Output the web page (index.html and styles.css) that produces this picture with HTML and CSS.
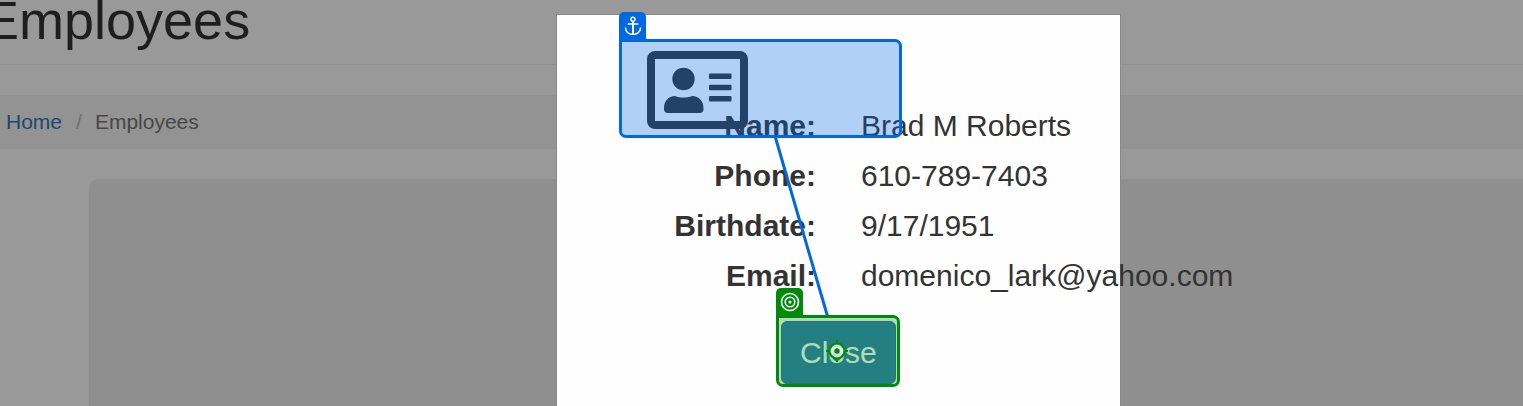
FILE: index.html
```html
<!DOCTYPE html>
<html lang="en">
<head>
<meta charset="utf-8">
<title>Employees</title>
<link rel="stylesheet" href="styles.css">
</head>
<body>
<div class="page">
  <header class="page-header"><h1 class="page-title">Employees</h1></header>
  <nav class="breadcrumb" aria-label="Breadcrumb">
    <a class="crumb-link" href="#">Home</a>
    <span class="crumb-divider">/</span>
    <span class="crumb-current">Employees</span>
  </nav>
  <main class="well"></main>
</div>
<div class="backdrop"></div>
<section class="modal" role="dialog" aria-label="Employee details">
  <svg class="card-icon" viewBox="0 0 101 78" aria-hidden="true">
    <rect x="4" y="4" width="93" height="70" rx="4" fill="none" stroke="currentColor" stroke-width="8"/>
    <circle cx="36.500" cy="28" r="11.200"/>
    <path d="M28 45C33 47 40 47 45 45C52 45 56.500 50 56.500 57V58Q56.500 62 52.500 62H21Q17 62 17 58V57C17 50 21.500 45 28 45Z"/>
    <rect x="62" y="22.500" width="22.500" height="5.500" rx="1"/>
    <rect x="62" y="33.700" width="22.500" height="5.500" rx="1"/>
    <rect x="62" y="45" width="22.500" height="5.500" rx="1"/>
  </svg>
  <dl class="details">
    <dt>Name:</dt><dd>Brad M Roberts</dd>
    <dt>Phone:</dt><dd>610-789-7403</dd>
    <dt>Birthdate:</dt><dd>9/17/1951</dd>
    <dt>Email:</dt><dd>domenico_lark@yahoo.com</dd>
  </dl>
  <button class="close-button" type="button">Close</button>
  <svg class="connector" viewBox="0 0 60 190" aria-hidden="true"><path d="M5 8L58 190" fill="none" stroke="currentColor" stroke-width="3"/></svg>
  <div class="mark anchor-mark">
    <span class="tag"><svg class="tag-icon" viewBox="0 0 20 20" fill="none" stroke="currentColor" stroke-width="1.500" aria-hidden="true">
      <circle cx="10" cy="3.300" r="2"/><path d="M10 5.400V18.200" stroke-width="2"/><path d="M4.700 8H15.300"/>
      <path d="M2.500 11.500C2.500 16 6 18.300 10 18.300S17.500 16 17.500 11.500"/>
    </svg></span>
  </div>
  <div class="mark target-mark">
    <span class="tag"><svg class="tag-icon" viewBox="0 0 20 20" fill="none" stroke="currentColor" stroke-width="1.600" aria-hidden="true">
      <circle cx="10" cy="10" r="8.500"/><circle cx="10" cy="10" r="4.800"/><circle cx="10" cy="10" r="1.500" fill="currentColor" stroke="none"/>
    </svg></span>
    <svg class="crosshair" viewBox="0 0 22 22" aria-hidden="true">
      <circle cx="11" cy="11" r="7.500" fill="#fff" fill-opacity=".75" stroke="currentColor" stroke-width="2.200"/>
      <circle cx="11" cy="11" r="2.700" fill="currentColor"/>
      <path d="M11 0V4M11 18V22M0 11H4M18 11H22" stroke="currentColor" stroke-width="2.200"/>
    </svg>
  </div>
</section>
</body>
</html>
```
FILE: styles.css
```css
* { box-sizing: border-box; }
body {
  margin: 0;
  height: 100vh;
  overflow: hidden;
  position: relative;
  background: #fff;
  color: #333;
  font-family: "Liberation Sans", Arial, sans-serif;
  font-size: 30px;
}
.page { display: flex; flex-direction: column; height: 100%; }
.page-header {
  height: 65px;
  flex: none;
  display: flex;
  align-items: flex-end;
  padding-bottom: 14px;
  border-bottom: 1px solid #eee;
}
.page-title {
  margin: 0 0 0 -17px;
  font-size: 54px;
  line-height: 60px;
  font-weight: 400;
}
.breadcrumb {
  flex: none;
  display: flex;
  margin-top: 30px;
  padding: 12px 6px;
  background: #f5f5f5;
  font-size: 21px;
  line-height: 30px;
}
.crumb-link { color: #337ab7; text-decoration: none; }
.crumb-divider { padding: 0 13px 0 14px; color: #bbb; }
.crumb-current { color: #777; }
.well {
  flex: 1;
  margin: 30px 0 0 89px;
  background: #eee;
  border-top-left-radius: 9px;
}
.backdrop { position: absolute; inset: 0; background: rgba(0, 0, 0, .4); }
.modal {
  position: absolute;
  top: 14px;
  bottom: -20px;
  left: 556px;
  width: 565px;
  padding: 36px 0 0;
  border: 1px solid #888;
  background: #fefefe;
}
.card-icon { display: block; width: 101px; height: 78px; margin-left: 90px; fill: currentColor; }
.details {
  display: grid;
  grid-template-columns: 259px 1fr;
  column-gap: 45px;
  margin: -28px 0 0;
  line-height: 50px;
  white-space: nowrap;
}
.details dt { font-weight: 700; text-align: right; }
.details dd { margin: 0; }
.close-button {
  display: block;
  margin: 20px 0 0 224px;
  padding: 10px 18px;
  border: 1px solid #2e6da4;
  border-radius: 6px;
  background: #337ab7;
  color: #fff;
  font: inherit;
  line-height: 41px;
}
.connector { position: absolute; left: 213px; top: 113px; width: 60px; height: 190px; color: #0068e0; }
.mark { position: absolute; border: 3px solid currentColor; border-radius: 0 7px 7px 7px; }
.anchor-mark {
  left: 62px;
  top: 24px;
  width: 283px;
  height: 99px;
  color: #0068e0;
  background: rgba(0, 104, 224, .3);
}
.target-mark {
  left: 219px;
  top: 300px;
  width: 124px;
  height: 72px;
  color: #008a09;
  background: rgba(0, 138, 9, .3);
}
.tag {
  position: absolute;
  left: -3px;
  bottom: calc(100% + 3px);
  width: 27px;
  height: 27px;
  display: grid;
  place-items: center;
  border-radius: 5px 5px 0 0;
  background: currentColor;
}
.tag-icon { width: 20px; height: 20px; color: #fff; }
.crosshair { position: absolute; left: 47px; top: 22px; width: 22px; height: 22px; }
```
